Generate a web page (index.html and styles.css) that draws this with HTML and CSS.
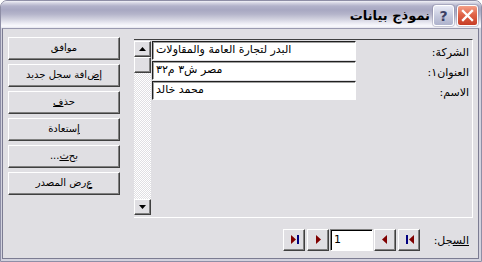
FILE: index.html
```html
<!DOCTYPE html>
<html lang="ar">
<head>
<meta charset="utf-8">
<title>نموذج بيانات</title>
<link rel="stylesheet" href="styles.css">
</head>
<body>
<div class="window">
  <div class="titlebar">
    <span class="title" dir="rtl">نموذج بيانات</span>
    <span class="tbtn help">?</span>
    <span class="tbtn close"><svg width="19" height="19" viewBox="0 0 19 19"><path d="M5 5 L14 14 M14 5 L5 14" stroke="#fff" stroke-width="2.3" stroke-linecap="square"/></svg></span>
  </div>
  <div class="client">
    <div class="main">
      <div class="actions">
        <div class="btn" dir="rtl">موافق</div>
        <div class="btn" dir="rtl">إ<u>ض</u>افة سجل جديد</div>
        <div class="btn" dir="rtl">حذ<u>ف</u></div>
        <div class="btn" dir="rtl"><u>إ</u>ستعادة</div>
        <div class="btn" dir="rtl">بح<u>ث</u>...</div>
        <div class="btn" dir="rtl"><u>ع</u>رض المصدر</div>
      </div>
      <div class="panel">
        <div class="vscroll">
          <div class="sbtn"><svg width="7" height="4" viewBox="0 0 7 4"><path d="M3.5 0 L7 4 L0 4 Z" fill="#000"/></svg></div>
          <div class="thumb"></div>
          <div class="track"></div>
          <div class="sbtn"><svg width="7" height="4" viewBox="0 0 7 4"><path d="M0 0 L7 0 L3.5 4 Z" fill="#000"/></svg></div>
        </div>
        <div class="fields">
          <div class="row">
            <div class="textbox">البدر لتجارة العامة والمقاولات</div>
            <div class="label" dir="rtl">الشركة:</div>
          </div>
          <div class="row">
            <div class="textbox">مصر ش٣ م٣٢</div>
            <div class="label" dir="rtl">العنوان١:</div>
          </div>
          <div class="row">
            <div class="textbox">محمد خالد</div>
            <div class="label" dir="rtl">الاسم:</div>
          </div>
        </div>
      </div>
    </div>
    <div class="nav">
      <div class="btn nbtn"><svg width="20" height="20" viewBox="0 0 20 20"><path d="M7 5 L12 9.5 L7 14 Z" fill="#800000"/><rect x="13" y="5" width="2" height="9" fill="#000080"/></svg></div>
      <div class="btn nbtn gap2"><svg width="20" height="20" viewBox="0 0 20 20"><path d="M8 5 L13 9.5 L8 14 Z" fill="#800000"/></svg></div>
      <div class="recfield">1</div>
      <div class="btn nbtn gap1"><svg width="20" height="20" viewBox="0 0 20 20"><path d="M12 5 L7 9.5 L12 14 Z" fill="#800000"/></svg></div>
      <div class="btn nbtn gap2"><svg width="20" height="20" viewBox="0 0 20 20"><rect x="7" y="5" width="2" height="9" fill="#000080"/><path d="M15 5 L10 9.5 L15 14 Z" fill="#800000"/></svg></div>
      <div class="navlabel" dir="rtl"><u>الس</u>جل:</div>
    </div>
  </div>
</div>
</body>
</html>
```

FILE: styles.css
```css
* { box-sizing: border-box; }
html, body { margin: 0; padding: 0; }
body {
  width: 482px;
  height: 262px;
  overflow: hidden;
  background: #ffffff;
  font-family: Tahoma, "DejaVu Sans", sans-serif;
  font-size: 11px;
  color: #000;
}
.window {
  width: 482px;
  height: 262px;
  border: 1px solid #8e8ea6;
  border-radius: 7px 7px 0 0;
  background: #d2d2de;
  display: flex;
  flex-direction: column;
  overflow: hidden;
}
.titlebar {
  flex: none;
  height: 27px;
  display: flex;
  justify-content: flex-end;
  align-items: flex-start;
  padding: 4px 3px 0 0;
  background: linear-gradient(to bottom, #f2f2f8 0px, #d4d4e2 2px, #b2b2ca 5px, #a8a8c2 9px, #b4b4ca 13px, #d0d0de 18px, #eaeaf2 22px, #fafafe 25px, #e6e6ee 27px);
}
.title {
  font-weight: bold;
  font-size: 13px;
  line-height: 21px;
  margin-right: 3px;
  color: #000;
}
.tbtn {
  width: 21px;
  height: 21px;
  border: 1px solid #ffffff;
  border-radius: 3px;
  display: flex;
  align-items: center;
  justify-content: center;
  box-shadow: 0 0 0 1px rgba(120,120,150,0.35);
}
.help {
  margin-right: 3px;
  background: linear-gradient(to bottom, #e8eaf6, #c4c8dc 55%, #aeb2cc);
  font-family: "DejaVu Sans", sans-serif;
  font-weight: bold;
  font-size: 14px;
  color: #3c4064;
}
.close {
  background: linear-gradient(to bottom, #f4a088, #e06448 45%, #c63c26);
}
.client {
  flex: none;
  width: 477px;
  height: 231px;
  margin-left: 1px;
  border: 1px solid #7c7c92;
  border-top-color: #9a9ab0;
  background: #e0dfe3;
}
.main {
  display: flex;
  align-items: flex-start;
  padding: 8px 0 0 5px;
}
.actions {
  width: 112px;
  display: flex;
  flex-direction: column;
  gap: 4px;
}
.btn {
  height: 23px;
  background: #e0dfe3;
  border: 1px solid;
  border-color: #ffffff #404040 #404040 #ffffff;
  box-shadow: inset -1px -1px 0 #808080;
  display: flex;
  align-items: center;
  justify-content: center;
  line-height: 1;
  font-size: 10px;
  padding-bottom: 2px;
}
.panel {
  width: 339px;
  height: 179px;
  margin: 2px 0 0 14px;
  border-top: 1px solid #404040;
  border-right: 1px solid #ffffff;
  border-bottom: 1px solid #ffffff;
  display: flex;
}
.vscroll {
  width: 17px;
  margin: 1px 0 2px;
  display: flex;
  flex-direction: column;
}
.sbtn, .thumb {
  height: 16px;
  background: #e0dfe3;
  border: 1px solid;
  border-color: #ffffff #404040 #404040 #ffffff;
  box-shadow: inset -1px -1px 0 #808080;
  display: flex;
  align-items: center;
  justify-content: center;
}
.track {
  flex: 1;
  background: repeating-conic-gradient(#ffffff 0 25%, #e0dfe3 0 50%) 0 0 / 2px 2px;
}
.fields {
  flex: 1;
  padding: 1px 3px 0 1px;
  display: flex;
  flex-direction: column;
  gap: 1px;
}
.row {
  height: 19px;
  display: flex;
  justify-content: space-between;
  align-items: flex-start;
}
.textbox {
  width: 204px;
  height: 19px;
  background: #ffffff;
  border: 1px solid;
  border-color: #202020 #ffffff #ffffff #202020;
  box-shadow: inset 1px 1px 0 #a0a0a0;
  padding: 0 3px;
  line-height: 16px;
  text-align: left;
  white-space: nowrap;
}
.label {
  padding-top: 6px;
  line-height: 12px;
}
.nav {
  display: flex;
  align-items: center;
  height: 22px;
  margin-top: 11px;
  padding-left: 280px;
  padding-right: 9px;
}
.nbtn {
  width: 22px;
  height: 22px;
  padding: 0;
}
.gap2 { margin-left: 2px; }
.gap1 { margin-left: 1px; }
.recfield {
  width: 43px;
  height: 22px;
  margin-left: 1px;
  background: #ffffff;
  border: 1px solid;
  border-color: #808080 #ffffff #ffffff #808080;
  box-shadow: inset 1px 1px 0 #000;
  padding: 0 3px;
  line-height: 19px;
}
.navlabel {
  margin-left: auto;
  line-height: 12px;
  padding-top: 2px;
}
```
